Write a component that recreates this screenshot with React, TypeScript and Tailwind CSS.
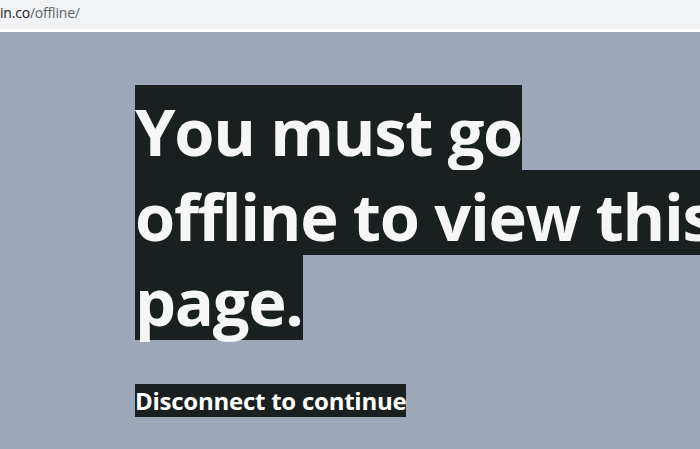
export default function App() {
  const lines = ["You must go", "offline to view this", "page."];

  return (
    <div className="w-[700px] h-[449px] overflow-hidden bg-[#9ea7ba] font-['Open_Sans','Noto_Sans',sans-serif]">
      {/* browser address bar strip */}
      <div className="h-[29px] bg-[#f1f3f4] flex items-center text-[14px] leading-none pb-[3px] tracking-[-0.2px]">
        <span className="text-[#202124]">in.co</span>
        <span className="text-[#5f6368]">/offline/</span>
      </div>
      <div className="h-[3px] bg-white" />

      <main className="pl-[135px] pt-[53px]">
        <h1 className="flex flex-col items-start text-[65px] leading-[93px] font-bold text-[#f6f6f6] tracking-[-1.3px] whitespace-nowrap">
          {lines.map(line => (
            <span key={line} className="bg-[#1a1f20] h-[85px]">
              {line}
            </span>
          ))}
        </h1>
        <p className="mt-[44px] inline-block bg-[#1a1f20] text-[24px] leading-[33px] font-bold text-white tracking-[-0.25px]">
          Disconnect to continue
        </p>
      </main>
    </div>
  );
}
